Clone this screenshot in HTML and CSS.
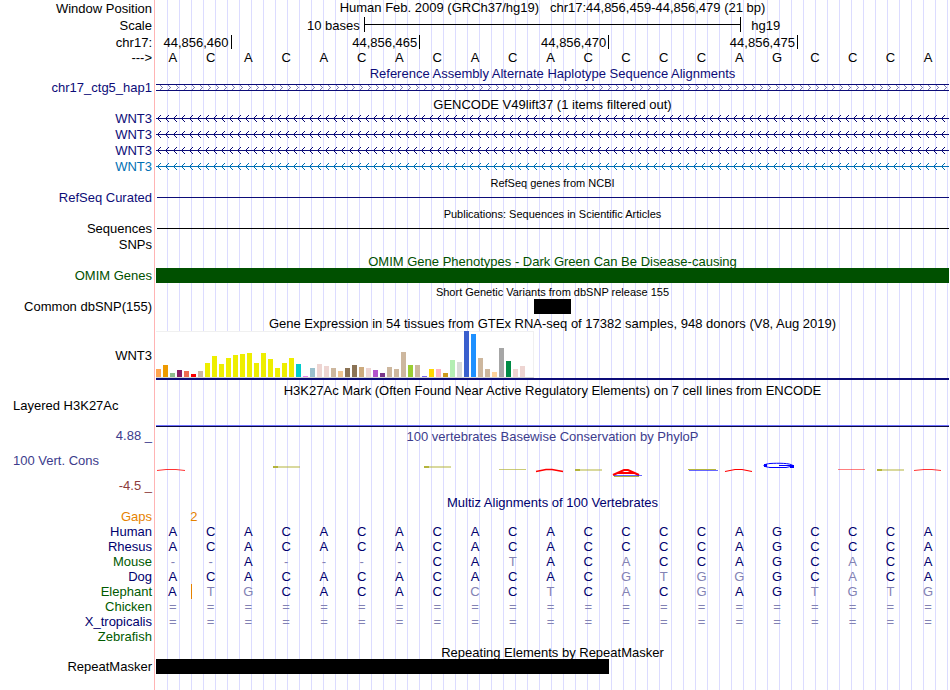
FILE: index.html
```html
<!DOCTYPE html>
<html lang="en">
<head>
    <meta charset="UTF-8">
    <title>chr17:44,856,459-44,856,479</title>
    <link rel="stylesheet" href="styles.css">
</head>
<body>
<svg class="defs" width="0" height="0">
    <defs>
        <pattern id="introns" width="8" height="7" patternUnits="userSpaceOnUse">
            <path d="M0 3h8v1H0zM2 2h1v3H2zM3 1h1v1H3zM3 5h1v1H3zM4 0h1v1H4zM4 6h1v1H4z" fill="#0c0c78"/>
        </pattern>
        <pattern id="introns-blue" width="8" height="7" patternUnits="userSpaceOnUse">
            <path d="M0 3h8v1H0zM2 2h1v3H2zM3 1h1v1H3zM3 5h1v1H3zM4 0h1v1H4zM4 6h1v1H4z" fill="#0070b4"/>
        </pattern>
        <pattern id="haplo" width="8" height="7" patternUnits="userSpaceOnUse">
            <path d="M4 1h1v1H4zM5 2h1v1H5zM6 3h1v1H6zM5 4h1v1H5zM4 5h1v1H4z" fill="#7878b4"/>
            <path d="M0 .5H8M0 6.5H8" stroke="#0c0c78"/>
        </pattern>
    </defs>
</svg>
<main class="browser">
    <!-- ruler -->
    <div class="row ruler">
        <div class="label">Window Position</div>
        <div class="title position">Human Feb. 2009 (GRCh37/hg19)   chr17:44,856,459-44,856,479 (21 bp)</div>
    </div>
    <div class="row ruler">
        <div class="label">Scale</div>
        <div class="halves">
            <span class="scale_text">10 bases</span>
            <span class="scale_bar"></span>
            <span class="scale_db">hg19</span>
        </div>
    </div>
    <div class="row ruler">
        <div class="label">chr17:</div>
        <div class="cells">
            <span class="tick first">44,856,460</span>
            <span class="tick">44,856,465</span>
            <span class="tick">44,856,470</span>
            <span class="tick">44,856,475</span>
        </div>
    </div>
    <div class="row sequence">
        <div class="label">---&gt;</div>
        <div class="cells bases"><b>A</b><b>C</b><b>A</b><b>C</b><b>A</b><b>C</b><b>A</b><b>C</b><b>A</b><b>C</b><b>A</b><b>C</b><b>C</b><b>C</b><b>C</b><b>A</b><b>G</b><b>C</b><b>C</b><b>C</b><b>A</b></div>
    </div>

    <section class="track navy">
        <h2 class="title">Reference Assembly Alternate Haplotype Sequence Alignments</h2>
        <div class="row">
            <div class="label">chr17_ctg5_hap1</div>
            <svg class="strand" height="7"><rect width="100%" height="7" fill="url(#haplo)"/></svg>
        </div>
    </section>

    <section class="track spaced">
        <h2 class="title">GENCODE V49lift37 (1 items filtered out)</h2>
        <div class="row gene navy">
            <div class="label">WNT3</div>
            <svg class="strand" height="7"><rect width="100%" height="7" fill="url(#introns)"/></svg>
        </div>
        <div class="row gene navy">
            <div class="label">WNT3</div>
            <svg class="strand" height="7"><rect width="100%" height="7" fill="url(#introns)"/></svg>
        </div>
        <div class="row gene navy">
            <div class="label">WNT3</div>
            <svg class="strand" height="7"><rect width="100%" height="7" fill="url(#introns)"/></svg>
        </div>
        <div class="row gene blue">
            <div class="label">WNT3</div>
            <svg class="strand" height="7"><rect width="100%" height="7" fill="url(#introns-blue)"/></svg>
        </div>
    </section>

    <section class="track">
        <h2 class="title small">RefSeq genes from NCBI</h2>
        <div class="row gene navy">
            <div class="label">RefSeq Curated</div>
            <div class="line"></div>
        </div>
    </section>

    <section class="track">
        <h2 class="title small">Publications: Sequences in Scientific Articles</h2>
        <div class="row gene">
            <div class="label">Sequences</div>
            <div class="line"></div>
        </div>
        <div class="row gene">
            <div class="label">SNPs</div>
        </div>
    </section>

    <section class="track green">
        <h2 class="title">OMIM Gene Phenotypes - Dark Green Can Be Disease-causing</h2>
        <div class="row">
            <div class="label">OMIM Genes</div>
            <div class="block"></div>
        </div>
    </section>

    <section class="track spaced">
        <h2 class="title small">Short Genetic Variants from dbSNP release 155</h2>
        <div class="row">
            <div class="label">Common dbSNP(155)</div>
            <div class="cells"><span class="block snp"></span></div>
        </div>
    </section>

    <section class="track graph">
        <h2 class="title">Gene Expression in 54 tissues from GTEx RNA-seq of 17382 samples, 948 donors (V8, Aug 2019)</h2>
        <div class="row gtex">
            <div class="label">WNT3</div>
            <div class="gtex_model">
                <div class="bars">
                    <i style="height:8px;background:#ffa54f"></i>
                    <i style="height:12px;background:#ee9a00"></i>
                    <i style="height:4px;background:#8fbc8f"></i>
                    <i style="height:7px;background:#8b1c62"></i>
                    <i style="height:6px;background:#ee6a50"></i>
                    <i style="height:3px;background:#ff0000"></i>
                    <i style="height:6px;background:#cdb79e"></i>
                    <i style="height:14px;background:#eeee00"></i>
                    <i style="height:21px;background:#eeee00"></i>
                    <i style="height:13px;background:#eeee00"></i>
                    <i style="height:19px;background:#eeee00"></i>
                    <i style="height:22px;background:#eeee00"></i>
                    <i style="height:23px;background:#eeee00"></i>
                    <i style="height:24px;background:#eeee00"></i>
                    <i style="height:14px;background:#eeee00"></i>
                    <i style="height:24px;background:#eeee00"></i>
                    <i style="height:18px;background:#eeee00"></i>
                    <i style="height:9px;background:#eeee00"></i>
                    <i style="height:14px;background:#eeee00"></i>
                    <i style="height:19px;background:#eeee00"></i>
                    <i style="height:13px;background:#00cdcd"></i>
                    <i style="height:1px;background:#ee82ee"></i>
                    <i style="height:9px;background:#9ac0cd"></i>
                    <i style="height:13px;background:#eed5d2"></i>
                    <i style="height:11px;background:#eed5d2"></i>
                    <i style="height:9px;background:#cdb79e"></i>
                    <i style="height:6px;background:#eec591"></i>
                    <i style="height:9px;background:#8b7355"></i>
                    <i style="height:12px;background:#8b7355"></i>
                    <i style="height:10px;background:#cdaa7d"></i>
                    <i style="height:9px;background:#eed5d2"></i>
                    <i style="height:7px;background:#b452cd"></i>
                    <i style="height:4px;background:#7a378b"></i>
                    <i style="height:10px;background:#cdb79e"></i>
                    <i style="height:8px;background:#cdb79e"></i>
                    <i style="height:25px;background:#cdb79e"></i>
                    <i style="height:12px;background:#9acd32"></i>
                    <i style="height:12px;background:#cdb79e"></i>
                    <i style="height:1px;background:#7a67ee"></i>
                    <i style="height:8px;background:#ffd700"></i>
                    <i style="height:8px;background:#ffb6c1"></i>
                    <i style="height:4px;background:#cd9b1d"></i>
                    <i style="height:17px;background:#b4eeb4"></i>
                    <i style="height:15px;background:#d9d9d9"></i>
                    <i style="height:46px;background:#3a5fcd"></i>
                    <i style="height:43px;background:#1e90ff"></i>
                    <i style="height:19px;background:#cdb79e"></i>
                    <i style="height:8px;background:#cdb79e"></i>
                    <i style="height:5px;background:#ffd39b"></i>
                    <i style="height:29px;background:#a6a6a6"></i>
                    <i style="height:16px;background:#008b45"></i>
                    <i style="height:8px;background:#eed5d2"></i>
                    <i style="height:11px;background:#eed5d2"></i>
                    <i style="height:0px;background:#ff00ff"></i>
                </div>
            </div>
        </div>
    </section>

    <section class="track graph">
        <h2 class="title">H3K27Ac Mark (Often Found Near Active Regulatory Elements) on 7 cell lines from ENCODE</h2>
        <div class="row wiggle">
            <div class="label left">Layered H3K27Ac</div>
            <div class="baseline"></div>
        </div>
    </section>

    <section class="row phylop">
        <div class="axis">
            <div class="label">4.88 _</div>
            <div class="label left">100 Vert. Cons</div>
            <div class="label low">-4.5 _</div>
        </div>
        <div class="spaced">
            <h2 class="title">100 vertebrates Basewise Conservation by PhyloP</h2>
            <svg class="scores" viewBox="0 0 793 50" preserveAspectRatio="none">
                <g fill="none" stroke="#f00">
                    <path d="M1 26.5L10 25.5H20L29 26.5" stroke-opacity=".8"/>
                    <path d="M380 27.5L390 25.5H396L407 27.5" stroke-width="1.3"/>
                    <path d="M457 31L468 26H472L483 31M464 29H477" stroke-width="2"/>
                    <path d="M569 27.5L579 25.5H586L596 27.5" stroke-width="1.2"/>
                    <path d="M682 25.5H709" stroke-opacity=".5"/>
                    <path d="M758 26.5L768 25.5H776L785 26.5" stroke-opacity=".8"/>
                </g>
                <g fill="none" stroke="#b4b43c">
                    <path d="M117 23H144M268 23H295M419 26H446M721 26H748" stroke-width="2" stroke-opacity=".5"/>
                    <path d="M117 23H122M268 23H273M419 26H424M721 26H726" stroke-width="2"/>
                    <path d="M343 25.5H370" stroke-opacity=".7"/>
                    <path d="M532 25.5H560M458 32.5H483"/>
                </g>
                <g fill="none" stroke="#00f">
                    <path d="M458 31.5H486M533 26.5H562" stroke-opacity=".6"/>
                    <path d="M637 21.5C634 19 622 19 614 19.5C606 20.5 606 22.5 614 23.5H630L637 22V21.5H623"/>
                    <path d="M608 21.5H611M634 22.5H638" stroke-width="3"/>
                </g>
            </svg>
        </div>
    </section>

    <section class="track multiz">
        <h2 class="title">Multiz Alignments of 100 Vertebrates</h2>
        <div class="row gaps">
            <div class="label">Gaps</div>
            <div class="cells"><span class="gap">2</span></div>
        </div>
        <div class="row">
            <div class="label">Human</div>
            <div class="cells bases"><b>A</b><b>C</b><b>A</b><b>C</b><b>A</b><b>C</b><b>A</b><b>C</b><b>A</b><b>C</b><b>A</b><b>C</b><b>C</b><b>C</b><b>C</b><b>A</b><b>G</b><b>C</b><b>C</b><b>C</b><b>A</b></div>
        </div>
        <div class="row">
            <div class="label">Rhesus</div>
            <div class="cells bases"><b>A</b><b>C</b><b>A</b><b>C</b><b>A</b><b>C</b><b>A</b><b>C</b><b>A</b><b>C</b><b>A</b><b>C</b><b>C</b><b>C</b><b>C</b><b>A</b><b>G</b><b>C</b><b>C</b><b>C</b><b>A</b></div>
        </div>
        <div class="row">
            <div class="label dark_green">Mouse</div>
            <div class="cells bases"><s>-</s><s>-</s><b>A</b><s>-</s><s>-</s><s>-</s><s>-</s><b>C</b><b>A</b><s>T</s><b>A</b><b>C</b><s>A</s><b>C</b><b>C</b><b>A</b><b>G</b><b>C</b><s>A</s><b>C</b><b>A</b></div>
        </div>
        <div class="row">
            <div class="label">Dog</div>
            <div class="cells bases"><b>A</b><b>C</b><b>A</b><b>C</b><b>A</b><b>C</b><b>A</b><b>C</b><b>A</b><b>C</b><b>A</b><b>C</b><s>G</s><s>T</s><s>G</s><s>G</s><b>G</b><b>C</b><s>A</s><b>C</b><b>A</b></div>
        </div>
        <div class="row">
            <div class="label dark_green">Elephant</div>
            <div class="cells bases"><b class="insert">A</b><s>T</s><s>G</s><b>C</b><b>A</b><b>C</b><b>A</b><b>C</b><s>C</s><b>C</b><s>T</s><b>C</b><s>A</s><b>C</b><s>G</s><b>A</b><b>G</b><s>T</s><s>G</s><s>T</s><s>G</s></div>
        </div>
        <div class="row">
            <div class="label dark_green">Chicken</div>
            <div class="cells bases"><s>=</s><s>=</s><s>=</s><s>=</s><s>=</s><s>=</s><s>=</s><s>=</s><s>=</s><s>=</s><s>=</s><s>=</s><s>=</s><s>=</s><s>=</s><s>=</s><s>=</s><s>=</s><s>=</s><s>=</s><s>=</s></div>
        </div>
        <div class="row">
            <div class="label">X_tropicalis</div>
            <div class="cells bases"><s>=</s><s>=</s><s>=</s><s>=</s><s>=</s><s>=</s><s>=</s><s>=</s><s>=</s><s>=</s><s>=</s><s>=</s><s>=</s><s>=</s><s>=</s><s>=</s><s>=</s><s>=</s><s>=</s><s>=</s><s>=</s></div>
        </div>
        <div class="row">
            <div class="label dark_green">Zebrafish</div>
        </div>
    </section>

    <section class="track">
        <h2 class="title">Repeating Elements by RepeatMasker</h2>
        <div class="row">
            <div class="label">RepeatMasker</div>
            <div class="cells"><span class="block repeat"></span></div>
        </div>
    </section>
</main>
</body>
</html>
```
FILE: styles.css
```css
body {
    margin: 0;
    background: white;
    color: black;
    font-family: "Liberation Sans", Arial, sans-serif;
    font-size: 13px;
    line-height: 15px;
}

.defs {
    display: block;
}

/* pink divider after the labels, then a guide line every 12px */
.browser {
    box-sizing: border-box;
    min-height: 100vh;
    padding-right: 1px;
    background:
        linear-gradient(#ffb4b4, #ffb4b4) 154px 0 / 1px 100% no-repeat,
        linear-gradient(white, white) 0 0 / 156px 100% no-repeat,
        linear-gradient(to right, #dcdcff 1px, transparent 1px) 167px 0 / 12px 100%;
}

.row {
    display: grid;
    grid-template-columns: 152px 1fr;
    column-gap: 4px;
    min-height: 15px;
}

.label {
    text-align: right;
    white-space: nowrap;
}

.label.left {
    padding-left: 13px;
    text-align: left;
}

.title {
    height: 14px;
    margin: 0 0 0 156px;
    font-size: 13px;
    font-weight: normal;
    line-height: 16px;
    text-align: center;
    white-space: nowrap;
}

.title.small {
    font-size: 11px;
    line-height: 14px;
}

.track {
    padding-top: 1px;
}

.spaced {
    padding-top: 2px;
}

.graph {
    padding-top: 3px;
}

.graph .title {
    line-height: 14px;
}

.cells {
    display: grid;
    grid-template-columns: repeat(21, 1fr);
}

.halves {
    display: grid;
    grid-template-columns: repeat(42, 1fr);
}

.navy {
    color: #0c0c78;
}

.blue {
    color: #0070b4;
}

.green {
    color: #005000;
}

/* ruler */
.ruler {
    min-height: 17px;
    line-height: 17px;
}

.position {
    margin: 0;
    line-height: 15px;
    white-space: pre;
}

.scale_text {
    grid-column: 1 / 12;
    padding-right: 4px;
    text-align: right;
}

.scale_bar {
    grid-column: 12 / 32;
    height: 15px;
    border: solid black;
    border-width: 0 1px;
    background: linear-gradient(black, black) 0 7px / 100% 1px no-repeat;
}

.scale_db {
    grid-column: 32 / 43;
    padding-left: 10px;
}

.tick {
    grid-column: span 5;
    height: 14px;
    margin-top: 1px;
    padding-right: 2px;
    border-right: 1px solid black;
    line-height: 15px;
    text-align: right;
    white-space: nowrap;
}

.tick.first {
    grid-column: span 2;
}

.sequence {
    min-height: 14px;
    line-height: 14px;
}

.bases {
    margin: 0 2px 0 -2px;
    text-align: center;
}

.bases b, .bases s {
    font-weight: normal;
    text-decoration: none;
}

.bases s {
    color: #8282b4;
}

/* items */
.strand {
    display: block;
    width: 100%;
    margin-top: 4px;
}

.gene {
    min-height: 16px;
    line-height: 16px;
}

.line {
    height: 1px;
    margin: 7px 0 0 1px;
    background: currentColor;
}

.block {
    height: 15px;
    background: currentColor;
}

.snp {
    grid-column: 11;
}

.repeat {
    grid-column: 1 / 13;
}

.gtex {
    line-height: 50px;
}

.gtex_model {
    height: 47px;
    border-bottom: 2px solid #0c0c78;
}

.bars {
    box-sizing: border-box;
    display: flex;
    align-items: flex-end;
    gap: 2px;
    width: 378px;
    height: 47px;
    border-bottom: 1px solid #d2d2d2;
    background: white;
    box-shadow: inset -1px 1px #f0f0f0;
}

.bars i {
    flex: 0 0 5px;
}

.wiggle {
    min-height: 30px;
}

.baseline {
    align-self: end;
    height: 1px;
    margin-bottom: 1px;
    border-top: 1px solid #6e6eff;
    background: #0a0a3c;
}

/* conservation */
.phylop {
    color: #3c3c8c;
}

.phylop .title {
    margin: 0;
    line-height: 14px;
}

.axis {
    display: flex;
    flex-direction: column;
    gap: 10px;
}

.low {
    color: #8c3c3c;
}

.scores {
    display: block;
    width: 100%;
    height: 50px;
}

.multiz {
    color: #00006e;
}

.dark_green {
    color: #005a00;
}

.gaps {
    color: #e68200;
}

.gap {
    grid-column: 1 / 3;
    text-align: center;
}

.insert {
    border-right: 1px solid #e68200;
}
```
